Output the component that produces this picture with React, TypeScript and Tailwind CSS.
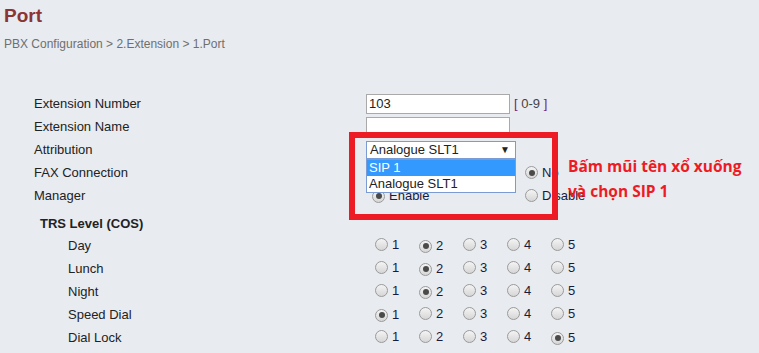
import React from 'react';

const font = { fontFamily: '"Liberation Sans", Arial, sans-serif' };

function Radio({ checked, label }: { checked?: boolean; label?: string }) {
  return (
    <span className="inline-flex items-center gap-[4px]">
      <span className="w-[13px] h-[13px] rounded-full border border-[#9a9a9a] bg-gradient-to-b from-[#f4f4f4] to-[#d6d6d6] flex items-center justify-center">
        {checked && <span className="w-[6px] h-[6px] rounded-full bg-[#4a4a4a]" />}
      </span>
      {label && <span className="text-[#1a1a3a]">{label}</span>}
    </span>
  );
}

const levels = [
  { name: 'Day', value: 2 },
  { name: 'Lunch', value: 2 },
  { name: 'Night', value: 2 },
  { name: 'Speed Dial', value: 1 },
  { name: 'Dial Lock', value: 5 },
];

export default function App() {
  return (
    <div
      className="relative w-[759px] h-[353px] overflow-hidden bg-[#e8ebf0] text-[13px] text-[#222]"
      style={font}
    >
      {/* Header */}
      <div className="pl-[4px] pt-[3px] h-[28px] text-[19px] font-bold text-[#8b3535] leading-[26px]">Port</div>
      <div className="pl-[4px] mt-[8px] text-[12px] text-[#6f6f6f] leading-[16px]">
        PBX Configuration &gt; 2.Extension &gt; 1.Port
      </div>

      {/* Form */}
      <div className="mt-[40px] pl-[34px]">
        <div className="flex items-center h-[23px]">
          <div className="w-[332px]">Extension Number</div>
          <div className="w-[144px] h-[20px] bg-white border border-[#a9a9a9] px-[2px] leading-[18px]">103</div>
          <div className="ml-[4px] text-[#444]">
            <span className="text-[#7a1a7a]">[</span> 0-9 <span className="text-[#7a1a7a]">]</span>
          </div>
        </div>
        <div className="flex items-center h-[23px]">
          <div className="w-[332px]">Extension Name</div>
          <div className="w-[144px] h-[20px] bg-white border border-[#a9a9a9]" />
        </div>
        <div className="flex items-center h-[23px]">
          <div className="w-[332px]">Attribution</div>
          <div className="relative w-[150px] h-[18px] bg-white border border-[#7a9cd3] flex items-center justify-between px-[3px]">
            <span>Analogue SLT1</span>
            <span className="text-[10px] mr-[2px]">▼</span>
            {/* open dropdown list */}
            <div className="absolute left-[-1px] top-[17px] w-[150px] bg-white border border-[#7a9cd3] z-10">
              <div className="h-[16px] leading-[16px] bg-[#3399ff] text-white px-[2px]">SIP 1</div>
              <div className="h-[16px] leading-[16px] px-[2px]">Analogue SLT1</div>
            </div>
          </div>
        </div>
        <div className="flex items-center h-[23px]">
          <div className="w-[338px]">FAX Connection</div>
          <div className="w-[153px]">
            <Radio label="Yes" />
          </div>
          <Radio checked label="No" />
        </div>
        <div className="flex items-center h-[23px]">
          <div className="w-[338px]">Manager</div>
          <div className="w-[153px]">
            <Radio checked label="Enable" />
          </div>
          <Radio label="Disable" />
        </div>

        <div className="flex items-center h-[21px] mt-[6px] pl-[6px] font-bold">TRS Level (COS)</div>
        {levels.map((lv) => (
          <div key={lv.name} className="flex items-center h-[23px]">
            <div className="w-[341px] pl-[34px]">{lv.name}</div>
            {[1, 2, 3, 4, 5].map((n) => (
              <div key={n} className="w-[44px]">
                <Radio checked={lv.value === n} label={String(n)} />
              </div>
            ))}
          </div>
        ))}
      </div>

      {/* Annotation box */}
      <div className="absolute left-[349px] top-[132px] w-[209px] h-[88px] border-[6px] border-[#ed1c24] z-20" />
      <div
        className="absolute left-[568px] top-[154px] text-[15.5px] font-bold text-[#ed1c24] leading-[25px]"
        style={{ fontFamily: '"Open Sans", "Noto Sans", sans-serif' }}
      >
        <div>Bấm mũi tên xổ xuống</div>
        <div>và chọn SIP 1</div>
      </div>
    </div>
  );
}
